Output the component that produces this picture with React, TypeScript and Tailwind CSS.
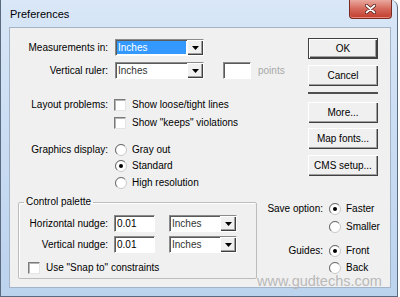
import type { ReactNode } from 'react';

function DropButton() {
  return (
    <div className="ml-auto flex h-full w-[16px] shrink-0 items-center justify-center bg-[#f0f0f0] shadow-[inset_1px_1px_0_#ffffff,inset_-1px_-1px_0_#404040,inset_-2px_-2px_0_#a0a0a0]">
      <svg width="7" height="4" viewBox="0 0 7 4">
        <path d="M0 0h7L3.5 4z" fill="#000" />
      </svg>
    </div>
  );
}

function Select({ width, value, active }: { width: string; value: string; active?: boolean }) {
  return (
    <div
      className={`flex h-[17px] ${width} border border-b-white border-l-[#8a8a8a] border-r-white border-t-[#8a8a8a] bg-white shadow-[inset_1px_1px_0_#5a5a5a]`}
    >
      <div
        className={`ml-[1px] mt-[1px] mb-[1px] mr-[1px] flex flex-1 items-center pl-[1px] ${
          active ? 'bg-[#3399ff] text-white' : 'text-[#333]'
        }`}
      >
        {value}
      </div>
      <DropButton />
    </div>
  );
}

function TextBox({ width, value }: { width: string; value?: string }) {
  return (
    <div
      className={`flex h-[17px] ${width} items-center border border-b-white border-l-[#8a8a8a] border-r-white border-t-[#8a8a8a] bg-white pl-[2px] shadow-[inset_1px_1px_0_#5a5a5a]`}
    >
      {value}
    </div>
  );
}

function Check() {
  return (
    <div className="h-[12px] w-[12px] shrink-0 border border-b-[#e4e4e4] border-l-[#7a7a7a] border-r-[#e4e4e4] border-t-[#7a7a7a] bg-white shadow-[inset_1px_1px_0_#b4b4b4]" />
  );
}

function Radio({ on }: { on?: boolean }) {
  return (
    <svg width="12" height="12" viewBox="0 0 12 12" className="shrink-0">
      <circle cx="6" cy="6" r="5.5" fill="#fff" stroke="#c8c8c8" />
      <path d="M2.1 9.9A5.5 5.5 0 0 1 9.9 2.1" fill="none" stroke="#6a6a6a" />
      {on && <circle cx="6" cy="6" r="2" fill="#000" />}
    </svg>
  );
}

function Button({ children, primary }: { children: ReactNode; primary?: boolean }) {
  return (
    <div
      className={`flex h-[21px] w-[70px] items-center justify-center bg-[#f0f0f0] ${
        primary
          ? 'border border-[#404040] shadow-[inset_1px_1px_0_#ffffff,inset_-1px_-1px_0_#404040,inset_-2px_-2px_0_#a0a0a0]'
          : 'shadow-[inset_1px_1px_0_#ffffff,inset_-1px_-1px_0_#404040,inset_-2px_-2px_0_#a0a0a0]'
      }`}
    >
      {children}
    </div>
  );
}

function Row({ label, children, className = '' }: { label?: string; children: ReactNode; className?: string }) {
  return (
    <div className={`flex items-center ${className}`}>
      <div className="w-[98px] shrink-0 text-right">{label}</div>
      {children}
    </div>
  );
}

export default function App() {
  return (
    <div className="relative h-[297px] w-[400px] overflow-hidden bg-white font-['Liberation_Sans',Arial,sans-serif] text-[10px] leading-none text-black">
      <div className="flex h-[297px] w-[398px] flex-col rounded-tr-[7px] border-b border-l border-r border-[#5a6b80] bg-gradient-to-b from-[#d9e7f7] via-[#c9dcf2] to-[#bcd3ee]">
        {/* title bar */}
        <div className="flex h-[27px] shrink-0 items-start">
          <div className="ml-[9px] mt-[9px] text-[11px] text-black">Preferences</div>
          <div className="ml-auto mr-[5px] flex h-[19px] w-[43px] items-center justify-center rounded-b-[4px] border border-t-0 border-[#7b2a22] bg-gradient-to-b from-[#e9a99f] via-[#d4685b] to-[#c23a2b] shadow-[inset_0_-1px_0_#e88a7e]">
            <svg width="11" height="10" viewBox="0 0 11 10">
              <path d="M1.5 1.5l8 7M9.5 1.5l-8 7" stroke="#4a1410" strokeWidth="3.2" strokeLinecap="round" />
              <path d="M1.5 1.5l8 7M9.5 1.5l-8 7" stroke="#fff" strokeWidth="1.8" strokeLinecap="round" />
            </svg>
          </div>
        </div>

        {/* client area */}
        <div className="ml-[8px] mr-[6px] flex h-[261px] flex-col border border-[#a3b3c8] bg-[#f0f0f0]">
          <div className="flex items-start pt-[10px]">
            <div className="w-[290px]">
              <Row label="Measurements in:" className="mt-[1px] h-[17px]">
                <div className="ml-[7px]">
                  <Select width="w-[89px]" value="Inches" active />
                </div>
              </Row>
              <Row label="Vertical ruler:" className="mt-[6px] h-[17px]">
                <div className="ml-[7px]">
                  <Select width="w-[89px]" value="Inches" />
                </div>
                <div className="ml-[19px]">
                  <TextBox width="w-[28px]" />
                </div>
                <div className="ml-[7px] text-[#a8a8a8]">points</div>
              </Row>
              <Row label="Layout problems:" className="mt-[19px] h-[13px]">
                <div className="ml-[6px]">
                  <Check />
                </div>
                <div className="ml-[6px]">Show loose/tight lines</div>
              </Row>
              <Row className="mt-[5px] h-[13px]">
                <div className="ml-[6px]">
                  <Check />
                </div>
                <div className="ml-[6px]">Show "keeps" violations</div>
              </Row>
              <Row label="Graphics display:" className="mt-[14px] h-[13px]">
                <div className="ml-[7px]">
                  <Radio />
                </div>
                <div className="ml-[5px]">Gray out</div>
              </Row>
              <Row className="mt-[3px] h-[13px]">
                <div className="ml-[7px]">
                  <Radio on />
                </div>
                <div className="ml-[5px]">Standard</div>
              </Row>
              <Row className="mt-[4px] h-[13px]">
                <div className="ml-[7px]">
                  <Radio />
                </div>
                <div className="ml-[5px]">High resolution</div>
              </Row>
            </div>

            <div className="ml-[8px] flex flex-col">
              <Button primary>OK</Button>
              <div className="mt-[6px]">
                <Button>Cancel</Button>
              </div>
              <div className="mt-[6px] h-[2px] w-[70px] bg-[#505050]" />
              <div className="mt-[8px]">
                <Button>More...</Button>
              </div>
              <div className="mt-[5px]">
                <Button>Map fonts...</Button>
              </div>
              <div className="mt-[6px]">
                <Button>CMS setup...</Button>
              </div>
            </div>
          </div>

          <div className="mt-[7px] flex items-start">
            <fieldset className="ml-[8px] h-[83px] w-[239px] rounded-[2px] border border-[#bcbcbc] shadow-[inset_1px_1px_0_#ffffff]">
              <legend className="ml-[5px] px-[2px] leading-[12px]">Control palette</legend>
              <div className="mt-[7px] flex h-[17px] items-center">
                <div className="w-[89px] text-right">Horizontal nudge:</div>
                <div className="ml-[6px]">
                  <TextBox width="w-[41px]" value="0.01" />
                </div>
                <div className="ml-[14px]">
                  <Select width="w-[68px]" value="Inches" />
                </div>
              </div>
              <div className="mt-[4px] flex h-[17px] items-center">
                <div className="w-[89px] text-right">Vertical nudge:</div>
                <div className="ml-[6px]">
                  <TextBox width="w-[41px]" value="0.01" />
                </div>
                <div className="ml-[14px]">
                  <Select width="w-[68px]" value="Inches" />
                </div>
              </div>
              <div className="ml-[9px] mt-[9px] flex h-[12px] items-center">
                <Check />
                <div className="ml-[6px]">Use "Snap to" constraints</div>
              </div>
            </fieldset>

            <div className="mt-[6px] flex flex-col">
              <div className="flex h-[13px] items-center">
                <div className="w-[66px] text-right">Save option:</div>
                <div className="ml-[6px]">
                  <Radio on />
                </div>
                <div className="ml-[5px]">Faster</div>
              </div>
              <div className="mt-[5px] flex h-[13px] items-center">
                <div className="w-[66px]" />
                <div className="ml-[6px]">
                  <Radio />
                </div>
                <div className="ml-[5px]">Smaller</div>
              </div>
              <div className="mt-[11px] flex h-[13px] items-center">
                <div className="w-[66px] text-right">Guides:</div>
                <div className="ml-[6px]">
                  <Radio on />
                </div>
                <div className="ml-[5px]">Front</div>
              </div>
              <div className="mt-[4px] flex h-[13px] items-center">
                <div className="w-[66px]" />
                <div className="ml-[6px]">
                  <Radio />
                </div>
                <div className="ml-[5px]">Back</div>
              </div>
            </div>
          </div>
        </div>
      </div>

      {/* watermark */}
      <div className="absolute left-[257px] top-[274px] text-[14.5px] leading-none text-[#b9b9b9]">
        www.gudtechs.com
      </div>
    </div>
  );
}
